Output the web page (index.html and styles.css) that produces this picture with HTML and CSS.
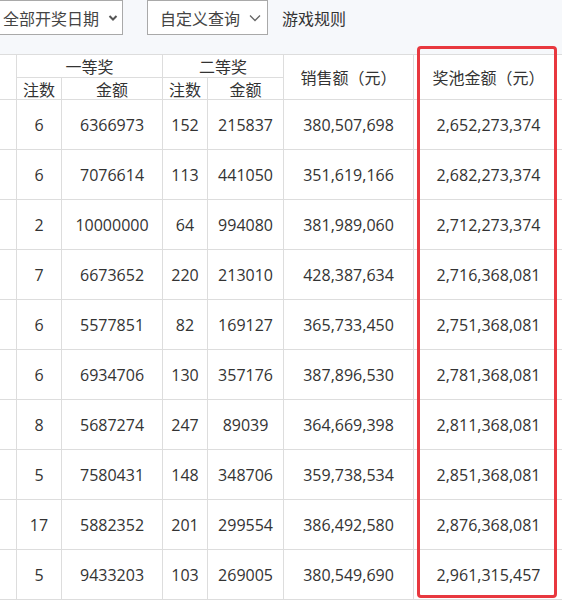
FILE: index.html
```html
<!DOCTYPE html>
<html lang="zh-CN">
<head>
<meta charset="utf-8">
<link rel="stylesheet" href="styles.css">
</head>
<body>
<div class="page">
  <div class="toolbar">
    <div class="select select-date">
      <span>全部开奖日期</span>
      <svg class="chev-bold" width="10" height="8" viewBox="0 0 10 8"><path d="M1.5 2 L5 5.5 L8.5 2" fill="none" stroke="#555" stroke-width="2"/></svg>
    </div>
    <div class="select select-query">
      <span>自定义查询</span>
      <svg class="chev-thin" width="12" height="8" viewBox="0 0 12 8"><path d="M1 1.5 L6 6.5 L11 1.5" fill="none" stroke="#666" stroke-width="1.3"/></svg>
    </div>
    <a class="rules">游戏规则</a>
  </div>
  <div class="table-wrap">
    <table class="grid">
      <colgroup>
        <col class="c0"><col class="c1"><col class="c2"><col class="c3"><col class="c4"><col class="c5"><col class="c6">
      </colgroup>
      <thead>
        <tr class="h1">
          <th rowspan="2" class="first"></th>
          <th colspan="2">一等奖</th>
          <th colspan="2">二等奖</th>
          <th rowspan="2">销售额（元）</th>
          <th rowspan="2">奖池金额（元）</th>
        </tr>
        <tr class="h2">
          <th>注数</th><th>金额</th><th>注数</th><th>金额</th>
        </tr>
      </thead>
      <tbody>
        <tr><td class="first"></td><td>6</td><td>6366973</td><td>152</td><td>215837</td><td>380,507,698</td><td>2,652,273,374</td></tr>
        <tr><td class="first"></td><td>6</td><td>7076614</td><td>113</td><td>441050</td><td>351,619,166</td><td>2,682,273,374</td></tr>
        <tr><td class="first"></td><td>2</td><td>10000000</td><td>64</td><td>994080</td><td>381,989,060</td><td>2,712,273,374</td></tr>
        <tr><td class="first"></td><td>7</td><td>6673652</td><td>220</td><td>213010</td><td>428,387,634</td><td>2,716,368,081</td></tr>
        <tr><td class="first"></td><td>6</td><td>5577851</td><td>82</td><td>169127</td><td>365,733,450</td><td>2,751,368,081</td></tr>
        <tr><td class="first"></td><td>6</td><td>6934706</td><td>130</td><td>357176</td><td>387,896,530</td><td>2,781,368,081</td></tr>
        <tr><td class="first"></td><td>8</td><td>5687274</td><td>247</td><td>89039</td><td>364,669,398</td><td>2,811,368,081</td></tr>
        <tr><td class="first"></td><td>5</td><td>7580431</td><td>148</td><td>348706</td><td>359,738,534</td><td>2,851,368,081</td></tr>
        <tr><td class="first"></td><td>17</td><td>5882352</td><td>201</td><td>299554</td><td>386,492,580</td><td>2,876,368,081</td></tr>
        <tr><td class="first"></td><td>5</td><td>9433203</td><td>103</td><td>269005</td><td>380,549,690</td><td>2,961,315,457</td></tr>
      </tbody>
    </table>
    <div class="highlight"></div>
  </div>
</div>
</body>
</html>
```
FILE: styles.css
```css
* { box-sizing: border-box; }
html, body {
  margin: 0;
  padding: 0;
  background: #ffffff;
  overflow: hidden;
}
body {
  font-family: "Open Sans", "Noto Sans CJK SC", sans-serif;
  color: #333333;
  font-size: 16px;
}
.page {
  width: 562px;
  height: 602px;
  overflow: hidden;
}
.toolbar {
  height: 55px;
  background: #f6f8fb;
  display: flex;
  align-items: flex-start;
  border-bottom: 1px solid #dddddd;
}
.select {
  height: 35px;
  background: #ffffff;
  border: 1px solid #a9a9a9;
  display: flex;
  align-items: center;
  font-family: "Noto Sans CJK SC", sans-serif;
  font-size: 16px;
  color: #444444;
  line-height: 20px;
}
.select-date {
  width: 123px;
  border-left: none;
  padding-left: 3px;
  gap: 9px;
}
.select-query {
  width: 121px;
  margin-left: 24px;
  padding-left: 12px;
  gap: 9px;
}
.chev-thin { margin-top: 1px; }
.rules {
  margin-left: 14px;
  height: 35px;
  display: flex;
  align-items: center;
  font-family: "Noto Sans CJK SC", sans-serif;
  color: #333333;
  line-height: 20px;
}
.table-wrap {
  position: relative;
}
.grid {
  border-collapse: separate;
  border-spacing: 0;
  table-layout: fixed;
  width: 564px;
}
.c0 { width: 17px; }
.c1 { width: 45px; }
.c2 { width: 101px; }
.c3 { width: 45px; }
.c4 { width: 76px; }
.c5 { width: 130px; }
.c6 { width: 150px; }
.grid th, .grid td {
  padding: 0;
  border-right: 1px solid #dddddd;
  border-bottom: 1px solid #dddddd;
  text-align: center;
  white-space: nowrap;
  overflow: hidden;
}
.grid th {
  font-weight: normal;
  font-family: "Noto Sans CJK SC", sans-serif;
  font-size: 16px;
  line-height: 20px;
  color: #333333;
}
.h1 th { height: 23px; }
.h2 th { height: 22px; }
.grid td {
  height: 50px;
  font-size: 16px;
  line-height: 20px;
  color: #333333;
}
.highlight {
  position: absolute;
  left: 417px;
  top: -9px;
  width: 140px;
  height: 552px;
  border: 3px solid #e8383f;
  border-radius: 4px;
  pointer-events: none;
}
```
